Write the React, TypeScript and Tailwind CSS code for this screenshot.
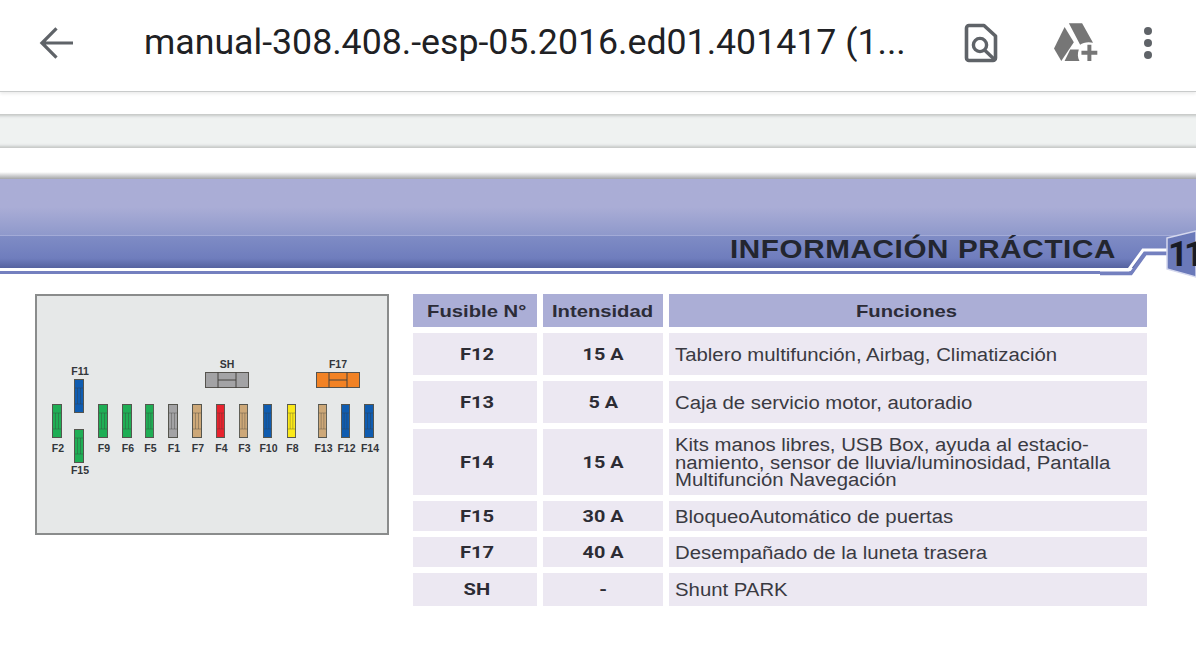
const fuses = [
  { name: "F2", x: 52, w: 10, y: 404, color: "#1fae55", labelY: 442 },
  { name: "F11", x: 74, w: 10, y: 379, color: "#0f5cb0", labelY: 365 },
  { name: "F15", x: 74, w: 10, y: 429, color: "#1fae55", labelY: 464 },
  { name: "F9", x: 98, w: 10, y: 404, color: "#1fae55", labelY: 442 },
  { name: "F6", x: 122, w: 10, y: 404, color: "#1fae55", labelY: 442 },
  { name: "F5", x: 145, w: 9, y: 404, color: "#1fae55", labelY: 442 },
  { name: "F1", x: 168, w: 10, y: 404, color: "#a3a3a5", labelY: 442 },
  { name: "F7", x: 192, w: 10, y: 404, color: "#cda878", labelY: 442 },
  { name: "F4", x: 216, w: 9, y: 404, color: "#e8232e", labelY: 442 },
  { name: "F3", x: 239, w: 9, y: 404, color: "#cda878", labelY: 442 },
  { name: "F10", x: 263, w: 9, y: 404, color: "#0f5cb0", labelY: 442 },
  { name: "F8", x: 287, w: 9, y: 404, color: "#fbe919", labelY: 442 },
  { name: "F13", x: 318, w: 9, y: 404, color: "#cda878", labelY: 442 },
  { name: "F12", x: 341, w: 9, y: 404, color: "#0f5cb0", labelY: 442 },
  { name: "F14", x: 364, w: 10, y: 404, color: "#0f5cb0", labelY: 442 },
];

const rows = [
  { fuse: "F12", amps: "15 A", text: ["Tablero multifunción, Airbag, Climatización"], h: "h-[42px]" },
  { fuse: "F13", amps: "5 A", text: ["Caja de servicio motor, autoradio"], h: "h-[42px]" },
  {
    fuse: "F14",
    amps: "15 A",
    text: ["Kits manos libres, USB Box, ayuda al estacio-", "namiento, sensor de lluvia/luminosidad, Pantalla", "Multifunción Navegación"],
    h: "h-[66px]",
  },
  { fuse: "F15", amps: "30 A", text: ["BloqueoAutomático de puertas"], h: "h-[30px]" },
  { fuse: "F17", amps: "40 A", text: ["Desempañado de la luneta trasera"], h: "h-[30px]" },
  { fuse: "SH", amps: "-", text: ["Shunt PARK"], h: "h-[33px]" },
];

function VFuse({ name, x, w, y, color, labelY }: (typeof fuses)[number]) {
  return (
    <>
      <svg
        className="absolute"
        style={{ left: x - 37, top: y - 296, width: w, height: 34 }}
        viewBox="0 0 10 34"
        preserveAspectRatio="none"
      >
        <rect x="0.5" y="0.5" width="9" height="33" fill={color} stroke="#55554e" strokeWidth="1" />
        <path d="M1 9H9M1 25H9M3.500 9V25M6.500 9V25" fill="none" stroke="#3c3c38" strokeWidth="0.6" opacity="0.6" />
      </svg>
      <span
        className="absolute w-8 -translate-x-1/2 text-center text-[10.5px] leading-3 font-bold text-[#33363a]"
        style={{ left: x - 37 + w / 2 + 1, top: labelY - 296 }}
      >
        {name}
      </span>
    </>
  );
}

function HFuse({ name, x, color }: { name: string; x: number; color: string }) {
  return (
    <>
      <svg className="absolute top-[76px] h-[16px] w-[44px]" style={{ left: x - 37 }} viewBox="0 0 44 16">
        <rect x="0.5" y="0.5" width="43" height="15" fill={color} stroke="#55534e" />
        <path d="M13 0V16M31 0V16M13 8H31" fill="none" stroke="#44423e" />
      </svg>
      <span
        className="absolute top-[62px] w-8 -translate-x-1/2 text-center text-[10.5px] leading-3 font-bold text-[#33363a]"
        style={{ left: x - 37 + 22 }}
      >
        {name}
      </span>
    </>
  );
}

export default function App() {
  return (
    <div className="relative h-[665px] w-[1196px] overflow-hidden bg-white font-['Liberation_Sans',sans-serif]">
      {/* Toolbar */}
      <div className="flex h-[92px] items-center border-b border-[#c9cbcb] bg-white shadow-[0_2px_3px_rgba(0,0,0,0.08)]">
        <svg className="ml-[39px] h-[36px] w-[35px] -translate-y-[3px]" viewBox="0 0 36 36" fill="none">
          <path d="M35 18H5M18 3L3 18L18 33" stroke="#5f6368" strokeWidth="3.300" />
        </svg>
        <span className="ml-[70px] w-[770px] -translate-y-[3px] font-['Roboto',sans-serif] text-[35.700px] leading-none whitespace-nowrap text-[#202124]">
          manual-308.408.-esp-05.2016.ed01.401417 (1...
        </span>
        <svg className="ml-[50px] h-[40px] w-[34px] -translate-y-[3px]" viewBox="0 0 34 40" fill="none">
          <path
            d="M2.500 5A2.500 2.500 0 0 1 5 2.500H20L31.500 13V35A2.500 2.500 0 0 1 29 37.500H5A2.500 2.500 0 0 1 2.500 35Z"
            stroke="#5f6368"
            strokeWidth="3.600"
            strokeLinejoin="round"
          />
          <circle cx="16" cy="22" r="6.600" stroke="#5f6368" strokeWidth="3.400" />
          <path d="M20.500 27L30 36" stroke="#5f6368" strokeWidth="3.400" />
        </svg>
        <svg className="ml-[55px] h-[39px] w-[45px] -translate-y-[3px]" viewBox="310 68 136 118">
          <path d="M358 69H398L431 128C415 124 400 128 392 134Z" fill="#767676" />
          <path d="M345 80L373 126L335 183L313 145Z" fill="#767676" />
          <path d="M345 183L362 148H388C384 160 384 172 390 183Z" fill="#767676" />
          <path d="M414 134H426V152H444V164H426V183H414V164H396V152H414Z" fill="#767676" />
        </svg>
        <svg className="ml-[43px] h-[40px] w-[16px] -translate-x-[1px] -translate-y-[3px]" viewBox="0 0 16 40">
          <circle cx="8" cy="8" r="4" fill="#5f6368" />
          <circle cx="8" cy="20" r="4" fill="#5f6368" />
          <circle cx="8" cy="32" r="4" fill="#5f6368" />
        </svg>
      </div>

      {/* Top of the document page */}
      <div className="mx-[-6px] mt-[22px] h-[34px] bg-[#eff2f1] shadow-[inset_0_3px_3px_-1px_#c4c6c5,inset_0_-3px_3px_-1px_#c4c6c5]" />
      <div className="mt-[24px] h-[7px] bg-gradient-to-b from-white to-[#a4a5a8]" />
      <div className="h-[56px] bg-gradient-to-b from-[#aaadd6] from-50% to-[#8f99cb]" />
      <div className="h-[33px] border-t border-[#a3abd7] bg-gradient-to-b from-[#7f8cc5] via-[#6f7dbd] via-70% to-[#55629f]" />
      <div className="h-[3px] bg-white" />
      <div className="h-[3px] bg-[#7480bf]" />

      {/* Chapter tab */}
      <span className="absolute top-[235px] left-[730px] origin-left scale-x-[1.139] text-[26px] leading-[28px] font-bold tracking-[0.55px] whitespace-nowrap text-[#23262f]">
        INFORMACIÓN PRÁCTICA
      </span>
      <svg className="absolute top-[225px] left-[1100px] h-[60px] w-[96px]" viewBox="1100 225 96 60">
        <path d="M1131 276L1146 254H1196V285H1131Z" fill="#fff" />
        <path d="M1100 273.500H1131L1145.500 253.500H1168" fill="none" stroke="#7480bf" strokeWidth="3.500" />
        <path d="M1100 270H1128.500L1143 250H1168" fill="none" stroke="#fff" strokeWidth="3" />
        <path d="M1167 238L1196 231V277L1167 269Z" fill="#6a79b9" stroke="#d5d8ee" strokeWidth="1.500" />
        <text
          x="1168"
          y="266"
          fontSize="35"
          fontWeight="700"
          letterSpacing="-4"
          fill="#191b24"
          fontFamily="Roboto, sans-serif"
        >
          11
        </text>
      </svg>

      {/* Fuse diagram and table */}
      <div className="mt-[20px] flex items-start pl-[35px]">
        <div className="relative h-[241px] w-[354px] shrink-0 border-2 border-[#8a8c8c] bg-[#e6e8e8]">
          {fuses.map((f) => (
            <VFuse key={f.name} {...f} />
          ))}
          <HFuse name="SH" x={205} color="#a3a3a5" />
          <HFuse name="F17" x={316} color="#f28224" />
        </div>

        <div className="ml-[24px] grid grid-cols-[124px_120px_478px] gap-[6px]">
          <div className="flex h-[33px] items-center justify-center bg-[#abaed6] pt-[2px] pl-[3px] text-[17px] font-bold text-[#2c2c38]">
            <span className="scale-x-[1.19]">Fusible N°</span>
          </div>
          <div className="flex h-[33px] items-center justify-center bg-[#abaed6] pt-[2px] text-[17px] font-bold text-[#2c2c38]">
            <span className="scale-x-[1.19]">Intensidad</span>
          </div>
          <div className="flex h-[33px] items-center justify-center bg-[#abaed6] pt-[2px] text-[17px] font-bold text-[#2c2c38]">
            <span className="-translate-x-[1px] scale-x-[1.19]">Funciones</span>
          </div>
          {rows.map((r) => (
            <div key={r.fuse} className="contents">
              <div className={`flex items-center justify-center bg-[#ece8f2] pt-[2px] pl-[3px] font-['Roboto',sans-serif] text-[16.5px] font-bold text-[#2c2c34] ${r.h}`}>
                <span className="scale-x-[1.22]">{r.fuse}</span>
              </div>
              <div className={`flex items-center justify-center bg-[#ece8f2] pt-[2px] font-['Roboto',sans-serif] text-[16.5px] font-bold text-[#2c2c34] ${r.h}`}>
                <span className="scale-x-[1.2]">{r.amps}</span>
              </div>
              <div className={`flex items-center bg-[#ece8f2] pt-[3px] pl-[6px] text-[18px] leading-[17.5px] whitespace-nowrap text-[#3a3a42] ${r.h}`}>
                <span className="origin-left scale-x-[1.13]">
                  {r.text.map((t, i) => (
                    <span key={t}>
                      {i > 0 && <br />}
                      {t}
                    </span>
                  ))}
                </span>
              </div>
            </div>
          ))}
        </div>
      </div>
    </div>
  );
}
